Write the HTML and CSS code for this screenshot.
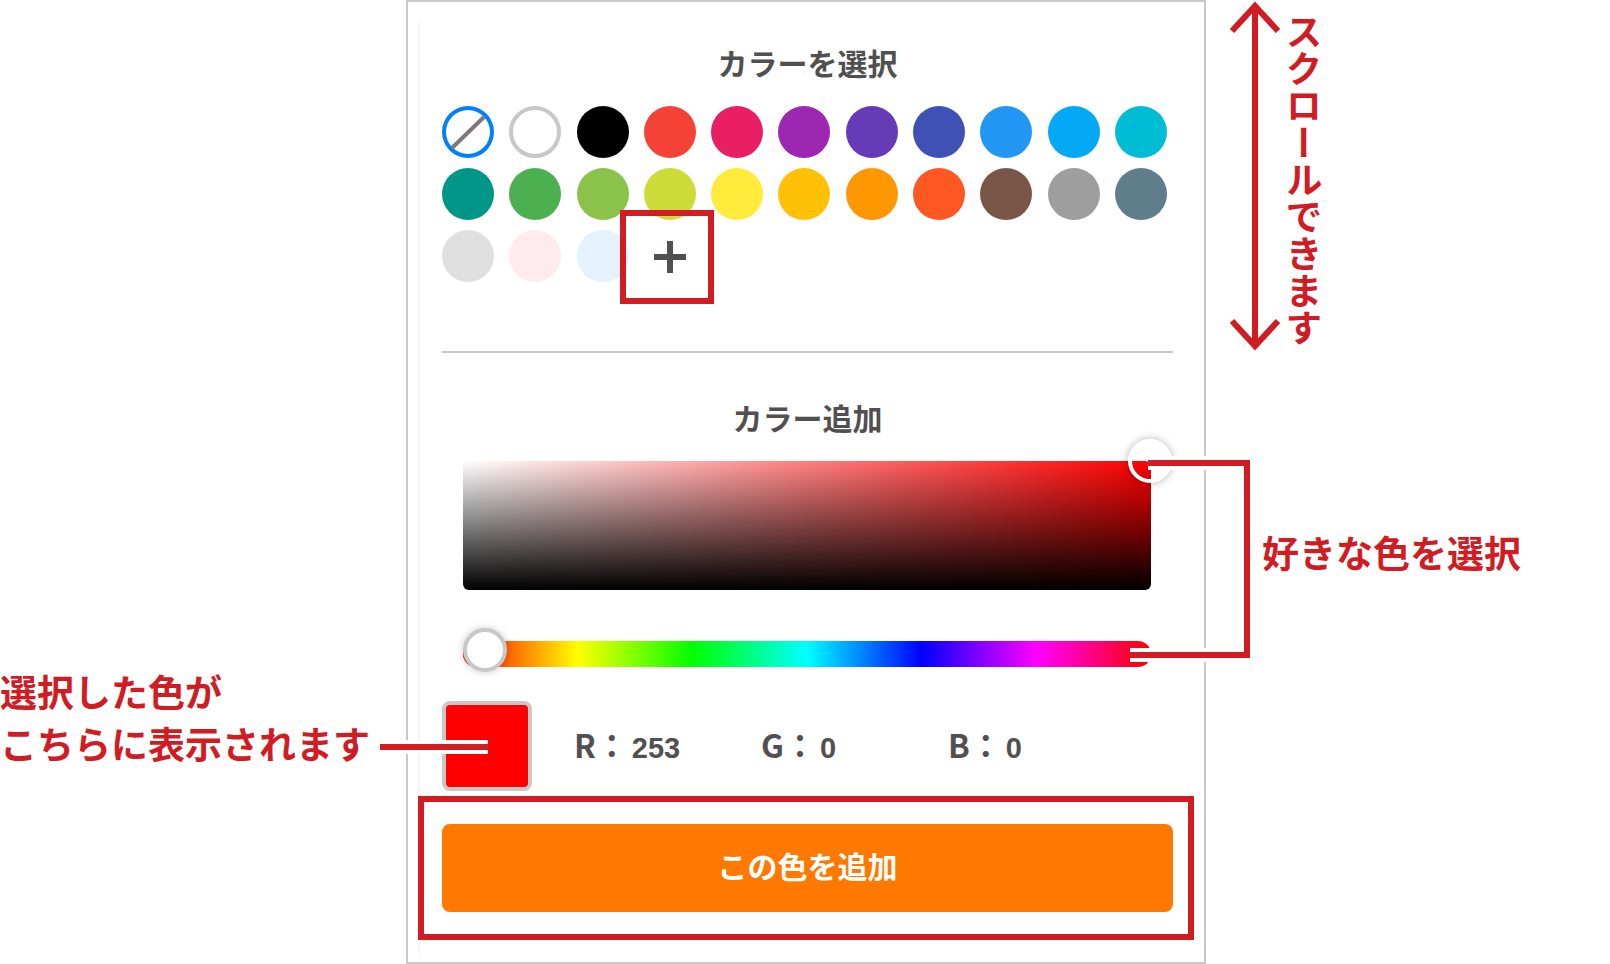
FILE: index.html
```html
<!DOCTYPE html>
<html lang="ja">
<head>
    <meta charset="UTF-8">
    <meta name="viewport" content="width=device-width, initial-scale=1.0">
    <title>カラーを選択</title>
    <link rel="stylesheet" href="styles.css">
</head>
<body>
    <div class="guide">
        <aside class="side-left">
            <p class="note">選択した色が<br>こちらに表示されます</p>
        </aside>

        <main class="panel">
            <h2>カラーを選択</h2>
            <div class="swatches">
                <button class="swatch none" aria-label="なし">
                    <svg viewBox="0 0 52 52"><path d="M10 42 42 11" stroke="#7f7879" stroke-width="4"/></svg>
                </button>
                <button class="swatch white" aria-label="白"></button>
                <button class="swatch black" aria-label="黒"></button>
                <button class="swatch red" aria-label="赤"></button>
                <button class="swatch pink" aria-label="ピンク"></button>
                <button class="swatch purple" aria-label="紫"></button>
                <button class="swatch violet" aria-label="青紫"></button>
                <button class="swatch indigo" aria-label="藍"></button>
                <button class="swatch blue" aria-label="青"></button>
                <button class="swatch sky" aria-label="空色"></button>
                <button class="swatch cyan" aria-label="シアン"></button>
                <button class="swatch teal" aria-label="青緑"></button>
                <button class="swatch green" aria-label="緑"></button>
                <button class="swatch leaf" aria-label="黄緑"></button>
                <button class="swatch lime" aria-label="ライム"></button>
                <button class="swatch yellow" aria-label="黄"></button>
                <button class="swatch amber" aria-label="琥珀"></button>
                <button class="swatch orange" aria-label="オレンジ"></button>
                <button class="swatch vermilion" aria-label="朱"></button>
                <button class="swatch brown" aria-label="茶"></button>
                <button class="swatch gray" aria-label="グレー"></button>
                <button class="swatch slate" aria-label="青灰"></button>
                <button class="swatch silver" aria-label="薄いグレー"></button>
                <button class="swatch blush" aria-label="薄いピンク"></button>
                <button class="swatch ice" aria-label="薄い青"></button>
                <button class="swatch plus" aria-label="カラー追加">
                    <svg viewBox="0 0 52 52"><path d="M10 27H42M26 11V43" stroke="#524f50" stroke-width="6"/></svg>
                </button>
            </div>
            <hr>

            <h2>カラー追加</h2>
            <div class="picker">
                <div class="shade">
                    <div class="shade-handle"></div>
                </div>
                <input class="hue" type="range" min="0" max="360" value="0" aria-label="色相">
                <!-- bracket joining the shade area and the hue slider -->
                <svg class="bracket" viewBox="0 0 124 206">
                    <path class="halo" d="M18 7H117V199H0"/>
                    <path class="line" d="M18 7H117V199H0"/>
                </svg>
            </div>
            <div class="result">
                <div class="preview"></div>
                <dl class="rgb">
                    <div><dt>R：</dt><dd>253</dd></div>
                    <div><dt>G：</dt><dd>0</dd></div>
                    <div><dt>B：</dt><dd>0</dd></div>
                </dl>
            </div>
            <div class="submit">
                <button class="add">この色を追加</button>
            </div>
        </main>

        <aside class="side-right">
            <div class="scroll-note">
                <svg class="arrow" viewBox="0 0 48 350">
                    <path d="M24 6V346M1 31 24 6 47 31M1 321 24 346 47 321"/>
                </svg>
                <p class="note vertical">スクロールできます</p>
            </div>
            <p class="note pick-note">好きな色を選択</p>
        </aside>
    </div>
</body>
</html>
```
FILE: styles.css
```css
* {
    box-sizing: border-box;
}
body {
    margin: 0;
    background: #fff;
    color: #524f50;
    font-family: "Noto Sans CJK JP", sans-serif;
}
.guide {
    display: grid;
    grid-template-columns: 406fr 800fr 404fr;
}
button {
    padding: 0;
    border: 0;
    font-family: inherit;
    cursor: pointer;
}

/* red notes */
.note {
    margin: 0;
    color: #d21c24;
    font-size: 37px;
    font-weight: 700;
    line-height: 52px;
    white-space: nowrap;
}
.side-left {
    padding-top: 665px;
}
.side-right {
    padding-left: 24px;
}
.scroll-note {
    display: flex;
    height: 352px;
}
.arrow {
    width: 48px;
    height: 350px;
    margin-left: 1px;
    overflow: visible;
    fill: none;
    stroke: #d21c24;
    stroke-width: 6;
}
.vertical {
    padding-top: 13px;
    line-height: 50px;
    writing-mode: vertical-rl;
}
.pick-note {
    margin-top: 174px;
    padding-left: 32px;
}

/* colour panel */
.panel {
    position: relative;
    padding: 40px 31px 50px 34px;
    border: 2px solid #c8c8c8;
}
.panel::before {
    content: "";
    position: absolute;
    top: 20px;
    bottom: 8px;
    left: 10px;
    width: 6px;
    border-left: 2px solid #f3f3f3;
    border-bottom-left-radius: 4px;
}
h2 {
    margin: 0 0 24px;
    font-size: 30px;
    font-weight: 700;
    line-height: 40px;
    text-align: center;
}
hr {
    height: 2px;
    margin: 69px 0 44px;
    border: 0;
    background: #c8c8c8;
}

.swatches {
    display: grid;
    grid-template-columns: repeat(11, 52px);
    justify-content: space-between;
    row-gap: 10px;
    padding-right: 6px;
}
.swatch {
    height: 52px;
    border-radius: 50%;
}
.swatch svg {
    display: block;
    width: 52px;
    height: 52px;
}
.none {
    background: #fff;
    box-shadow: inset 0 0 0 4px #0080ff;
}
.white {
    background: #fff;
    border: 4px solid #c8c8c8;
}
.black { background: #000; }
.red { background: #f44336; }
.pink { background: #e91e63; }
.purple { background: #9c27b0; }
.violet { background: #673ab7; }
.indigo { background: #3f51b5; }
.blue { background: #2196f3; }
.sky { background: #03a9f4; }
.cyan { background: #00bcd4; }
.teal { background: #009688; }
.green { background: #4caf50; }
.leaf { background: #8bc34a; }
.lime { background: #cddc39; }
.yellow { background: #ffeb3b; }
.amber { background: #ffc107; }
.orange { background: #ff9800; }
.vermilion { background: #ff5722; }
.brown { background: #795548; }
.gray { background: #9e9e9e; }
.slate { background: #607d8b; }
.silver { background: #e0e0e0; }
.blush { background: #ffebee; }
.ice { background: #e3f2fd; }
.plus {
    position: relative;
    background: none;
}
/* highlight frame round the plus */
.plus::after {
    content: "";
    position: absolute;
    inset: -20px -18px -22px -24px;
    border: 6px solid #d21c24;
}

.picker {
    position: relative;
    padding: 0 22px 0 21px;
}
.shade {
    position: relative;
    height: 129px;
    border-radius: 6px;
    background:
        linear-gradient(to top, #000, transparent),
        linear-gradient(to right, #fff, #f00);
}
.shade-handle {
    position: absolute;
    top: -22px;
    right: -21px;
    width: 44px;
    height: 44px;
    border: 4px solid #fff;
    border-radius: 50%;
    box-shadow: 0 0 8px rgba(0, 0, 0, 0.3);
}
.hue {
    display: block;
    appearance: none;
    width: 100%;
    height: 52px;
    margin: 38px 0 0;
    background: none;
}
.hue::-webkit-slider-runnable-track {
    height: 26px;
    border-radius: 13px;
    background: linear-gradient(to right, #f00, #ff0, #0f0, #0ff, #00f, #f0f, #f00);
}
.hue::-webkit-slider-thumb {
    appearance: none;
    width: 44px;
    height: 44px;
    margin-top: -13px;
    border: 4px solid #c8c8c8;
    border-radius: 50%;
    background: #fff;
    box-shadow: 0 0 8px rgba(0, 0, 0, 0.2);
}
.bracket {
    position: absolute;
    top: -5px;
    right: -81px;
    width: 124px;
    height: 206px;
    fill: none;
}
.halo {
    stroke: #fff;
    stroke-width: 14;
}
.line {
    stroke: #d21c24;
    stroke-width: 6;
}

.result {
    display: flex;
    align-items: center;
    margin-top: 21px;
}
.preview {
    position: relative;
    width: 90px;
    height: 90px;
    border: 4px solid #c8c8c8;
    border-radius: 8px;
    background: #f00;
}
/* pointer from the note on the left */
.preview::before {
    content: "";
    position: absolute;
    top: 39px;
    left: -66px;
    width: 108px;
    height: 6px;
    background: #d21c24;
    box-shadow: 0 4px #fff, 0 -4px #fff;
}
.rgb {
    display: flex;
    margin: 0 0 0 42px;
    font-weight: 700;
    line-height: 40px;
}
.rgb div {
    display: flex;
    align-items: flex-end;
    width: 187px;
}
.rgb dt {
    padding-bottom: 4px;
    font-size: 32px;
}
.rgb dd {
    margin: 0 0 0 4px;
    font-family: "Liberation Sans", sans-serif;
    font-size: 29px;
}

.submit {
    position: relative;
    margin-top: 33px;
}
.submit::before {
    content: "";
    position: absolute;
    inset: -28px -21px -28px -24px;
    border: 6px solid #d21c24;
}
.add {
    display: block;
    position: relative;
    width: 100%;
    height: 88px;
    padding-bottom: 6px;
    border-radius: 8px;
    background: #ff7800;
    color: #fff;
    font-size: 30px;
    font-weight: 700;
}
```
